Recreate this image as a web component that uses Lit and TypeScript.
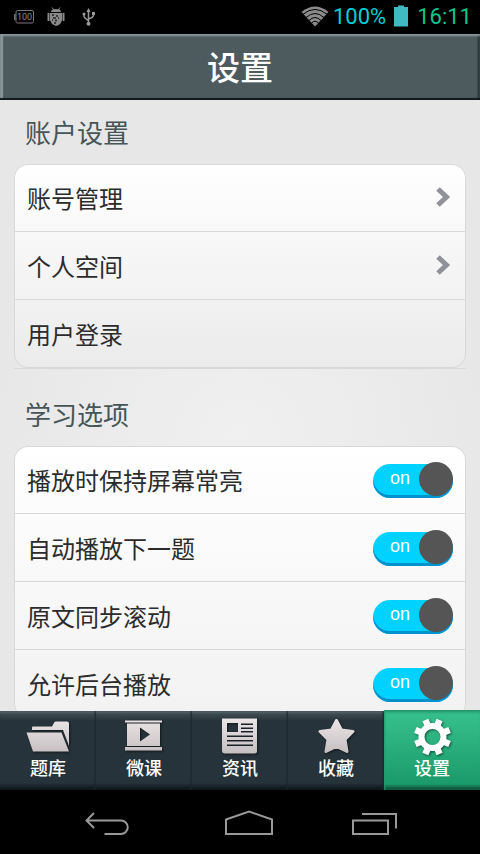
import { LitElement, html, svg, css } from "lit";
import { customElement, property } from "lit/decorators.js";

const tabs = [
  {
    label: "题库",
    icon: svg`
      <path d="M6 13V10.500Q6 9.500 7 9.500H26L28.500 5Q29 4.500 30 4.500H41Q43 4.500 43 6.500V29L37 13Z"/>
      <path d="M.5 15.500H35.500L43 34.500H7Z"/>`,
  },
  {
    label: "微课",
    icon: svg`
      <path d="M3 3.500H40V5.500H3Z M3 30H40V33.500H3Z"/>
      <path fill-rule="evenodd" d="M5 6.500H38V29H5Z M18 10.500V24.500L28 17.500Z"/>`,
  },
  {
    label: "资讯",
    icon: svg`
      <path fill-rule="evenodd" d="M4 1.500H39V34Q39 36.500 36.500 36.500H7Q4 36.500 4 33.500Z
        M9 6V15H20V6Z M23 6.500V8H35V6.500Z M23 10.500V12H35V10.500Z M23 14V15.500H35V14Z
        M9 18.500V20H35V18.500Z M9 23V24.500H35V23Z M9 27.500V29H35V27.500Z"/>`,
  },
  {
    label: "收藏",
    icon: svg`
      <path stroke="url(#metal)" stroke-width="3" stroke-linejoin="round"
        d="M22.500 3.500L27.500 13L39 14.500L31 22.500L33 34.500L22.500 29.500L12 34.500L14 22.500L6 14.500L17.500 13Z"/>`,
  },
  {
    label: "设置",
    icon: svg`
      <g fill="none" stroke="#fff">
        <circle cx="22.500" cy="20" r="11" stroke-width="6"/>
        <g stroke-width="6.500" transform="rotate(22.500 22.500 20)">
          <path d="M22.500 1.500V9M22.500 31V38.500M4 20H11.500M33.500 20H41"/>
          <path transform="rotate(45 22.500 20)" d="M22.500 1.500V9M22.500 31V38.500M4 20H11.500M33.500 20H41"/>
        </g>
      </g>`,
  },
];

@customElement("toggle-switch")
export class ToggleSwitch extends LitElement {
  @property() name = "";

  static styles = css`
    :host { display: block; }
    .row {
      display: flex;
      align-items: center;
      justify-content: space-between;
      height: 100%;
    }
    .switch { position: relative; display: block; width: 80px; height: 36px; }
    .box {
      appearance: none;
      display: block;
      width: 80px;
      height: 34px;
      margin: 2px 0 0;
      border-radius: 17px;
      background: #00d2ff;
      box-shadow: inset 0 -3px 0 #0092cf;
    }
    .box::before {
      content: "";
      position: absolute;
      top: 0;
      left: 0;
      width: 34px;
      height: 34px;
      border-radius: 50%;
      background: #555;
    }
    .box:checked::before { left: 46px; }
    .box:not(:checked) { background: #bbb; box-shadow: inset 0 -3px 0 #999; }
    .box:not(:checked) + .state { visibility: hidden; }
    .state {
      position: absolute;
      top: 6px;
      left: 17px;
      color: #fff;
      font: 18px/20px "Liberation Sans", Arial, sans-serif;
      pointer-events: none;
    }
  `;

  render() {
    return html`
      <label class="row">
        <span>${this.name}</span>
        <span class="switch">
          <input class="box" type="checkbox" checked />
          <span class="state">on</span>
        </span>
      </label>
    `;
  }
}

@customElement("app-root")
export class AppRoot extends LitElement {
  static styles = css`
    :host {
      display: flex;
      flex-direction: column;
      height: 100vh;
      background: #000;
      color: #2c2c2c;
      font-family: "Noto Sans CJK SC", sans-serif;
    }
    .status {
      flex: none;
      display: flex;
      align-items: center;
      height: 34px;
      padding: 0 8px 0 14px;
      font: 22px/34px Roboto, sans-serif;
    }
    .notices { flex: 1; height: 34px; }
    .wifi { width: 28px; height: 34px; margin-right: 4px; }
    .percent { color: #00cfd8; }
    .battery { width: 14px; height: 34px; margin: 0 9px 0 8px; }
    .clock { color: #0fc78c; }

    .title {
      flex: none;
      height: 66px;
      box-sizing: border-box;
      background: #4d5b5f;
      box-shadow: inset 0 -2px 1px #10181a, inset 0 2px 2px #8d989b,
        inset 3px 0 1px #8d989b, inset -2px 0 2px #1c2629;
      color: #fff;
      font-size: 33px;
      font-weight: 500;
      line-height: 64px;
      text-align: center;
      margin: 0;
    }

    .content {
      flex: 1;
      min-height: 0;
      overflow: hidden;
      padding: 0 14px;
      background: radial-gradient(circle at 50% 55%, #f0f0f0, #e7e7e7 260px);
    }
    .heading {
      height: 64px;
      margin: 0;
      padding-left: 11px;
      color: #465556;
      font-size: 26px;
      font-weight: 400;
      line-height: 64px;
    }
    .group { border-bottom: 1px solid #d9d9d9; margin-bottom: 13px; }
    .card {
      list-style: none;
      margin: 0;
      padding: 0;
      border-radius: 14px;
      box-shadow: inset 0 0 0 1px #d8d8d8;
      background: linear-gradient(#fff, #ebebeb);
    }
    .card.options { background: linear-gradient(#fff, #f2f2f2); }
    .item {
      box-sizing: border-box;
      height: 68px;
      padding: 0 13px;
      border-bottom: 1px solid #d8d8d8;
      font-size: 24px;
      line-height: 67px;
    }
    .item:last-child { border-bottom: none; }
    .link {
      display: flex;
      align-items: center;
      justify-content: space-between;
      color: inherit;
      text-decoration: none;
    }
    .chevron { width: 16px; height: 22px; margin-right: 2px; }
    .option { height: 67px; }

    .tabs {
      flex: none;
      display: grid;
      grid-template-columns: repeat(5, 1fr);
      height: 79px;
      background: linear-gradient(#637278, #3d4b51 3px, #26333a 10px, #26333a 72px, #0c1215);
    }
    .tab {
      display: flex;
      flex-direction: column;
      align-items: center;
      box-sizing: border-box;
      padding-top: 6px;
      color: #fff;
      font-size: 18px;
      font-weight: 500;
      line-height: 20px;
      text-decoration: none;
      box-shadow: inset -1px 0 2px #1c282e;
    }
    .tab.active {
      margin-top: -1px;
      padding-top: 7px;
      background: linear-gradient(#249067, #34be8b 4px, #33bb88 12px, #1b9a6b 74px, #0c3f2d);
      box-shadow: inset 1px 0 2px #249a70;
    }
    .icon { width: 44px; height: 40px; overflow: visible; filter: drop-shadow(1px 1px 1px #0008); }

    .system {
      flex: none;
      display: flex;
      justify-content: center;
      gap: 45px;
      height: 64px;
      padding-left: 18px;
    }
    .key { width: 80px; padding: 0; border: 0; background: none; }
    .glyph { display: block; width: 80px; height: 64px; fill: none; stroke: #999; stroke-width: 2; }
  `;

  render() {
    const chevron = html`<svg class="chevron" viewBox="0 0 16 22" aria-hidden="true">
      <path d="M3 2L11.500 10L3 18" fill="none" stroke="#90919a" stroke-width="5" />
    </svg>`;
    return html`
      <div class="status">
        <svg class="notices" viewBox="0 0 90 34" preserveAspectRatio="xMinYMid" aria-hidden="true">
          <rect x="2" y="10.500" width="17.500" height="12.500" rx="1.500" fill="none" stroke="#777" />
          <path d="M.8 14V20" stroke="#777" stroke-width="1.500" />
          <text x="3" y="20" fill="#888" font-family="Roboto" font-size="9">100</text>
          <g fill="#8a8a8a">
            <path d="M37 12Q37 9 42 9T47 12Z" />
            <path d="M38 7.500L40 10M46 7.500L44 10" stroke="#8a8a8a" />
            <path d="M36 13H48V20Q47 25 42 26L38 24L36 20Z" />
            <rect x="33.500" y="13" width="2" height="8" />
            <rect x="48.500" y="13" width="2" height="8" />
          </g>
          <path d="M38 15H40M42 16H44M39 18H42M44 18H45M38 20H39M41 20.500H43M40 23H42" stroke="#222" stroke-width="1.500" />
          <g fill="none" stroke="#999" stroke-width="1.500">
            <path d="M74.500 10V24M70 14V16Q70 18 74.500 20.500M79.500 13V15Q79.500 17.500 74.500 19" />
          </g>
          <g fill="#999">
            <path d="M72.500 12L74.500 8L76.500 12Z" />
            <circle cx="74.500" cy="23.800" r="2" />
            <circle cx="70" cy="14" r="1.500" />
            <rect x="78" y="12" width="3" height="3" />
          </g>
        </svg>
        <svg class="wifi" viewBox="0 0 28 34" aria-hidden="true">
          <path d="M.5 12Q14 1 27.500 12L14 26.500Z" fill="#8b8b8b" />
          <g fill="none" stroke="#000" stroke-width="1">
            <path d="M2 14.300Q14 4.500 26 14.300" />
            <path d="M5 17.500Q14 9.500 23 17.500" />
            <path d="M8 20.500Q14 14.500 20 20.500" />
            <path d="M10.500 23Q14 19.500 17.500 23" />
          </g>
        </svg>
        <span class="percent">100%</span>
        <svg class="battery" viewBox="0 0 14 34" aria-hidden="true">
          <path d="M0 7H4V5.500H10V7H14V26.500H0Z" fill="#40b9c0" />
        </svg>
        <span class="clock">16:11</span>
      </div>

      <h1 class="title">设置</h1>

      <main class="content">
        <h2 class="heading">账户设置</h2>
        <div class="group">
          <ul class="card">
            <li class="item"><a class="link" href="#account">账号管理${chevron}</a></li>
            <li class="item"><a class="link" href="#space">个人空间${chevron}</a></li>
            <li class="item"><a class="link" href="#login">用户登录</a></li>
          </ul>
        </div>
        <h2 class="heading">学习选项</h2>
        <div class="group">
          <ul class="card options">
            ${["播放时保持屏幕常亮", "自动播放下一题", "原文同步滚动", "允许后台播放"].map(
              (name) => html`<li class="item"><toggle-switch class="option" .name=${name}></toggle-switch></li>`
            )}
          </ul>
        </div>
      </main>

      <nav class="tabs">
        ${tabs.map(
          (tab, i) => html`<a class="tab ${i === 4 ? "active" : ""}" href="#tab${i}">
            <svg class="icon" viewBox="0 0 44 40" fill="url(#metal)" aria-hidden="true">
              <defs>
                <linearGradient id="metal" gradientUnits="userSpaceOnUse" x1="0" y1="2" x2="0" y2="36">
                  <stop offset="0" stop-color="#ebe5e6" />
                  <stop offset="1" stop-color="#c6bfc1" />
                </linearGradient>
              </defs>
              ${tab.icon}
            </svg>
            ${tab.label}
          </a>`
        )}
      </nav>

      <div class="system">
        <button class="key" aria-label="Back">
          <svg class="glyph" viewBox="0 0 80 64">
            <path d="M2 30.500H37A6.500 6.500 0 0 1 37 44H20.500M10 23L2.500 30.500L10 38" />
          </svg>
        </button>
        <button class="key" aria-label="Home">
          <svg class="glyph" viewBox="0 0 80 64">
            <path d="M17 44V29.500L40 21.500L63 29.500V44Z" />
          </svg>
        </button>
        <button class="key" aria-label="Recent apps">
          <svg class="glyph" viewBox="0 0 80 64">
            <path d="M19 30.500H54V44H19ZM28 24H62V38.500" />
          </svg>
        </button>
      </div>
    `;
  }
}
